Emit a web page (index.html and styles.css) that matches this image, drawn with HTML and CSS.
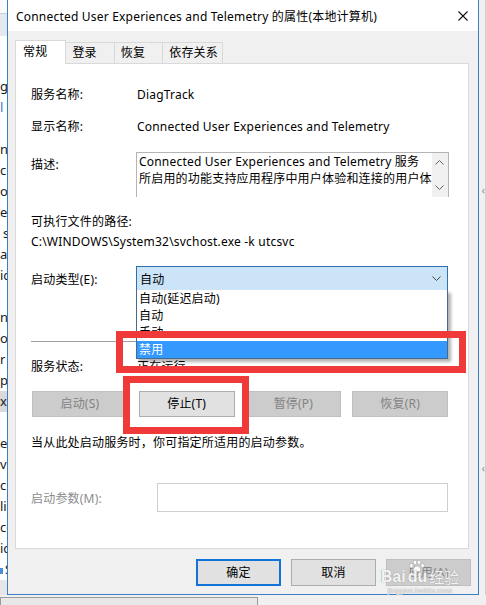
FILE: index.html
```html
<!DOCTYPE html>
<html lang="zh-CN">
<head>
    <meta charset="UTF-8">
    <title>Connected User Experiences and Telemetry 的属性(本地计算机)</title>
    <link rel="stylesheet" href="styles.css">
</head>
<body>
    <div class="desk">
        <!-- services list peeking out behind the dialog -->
        <div class="behind-left">
            <div class="behind-head"></div>
            <div class="bg-row">g</div>
            <div class="bg-row blue">l</div>
            <div class="bg-row"></div>
            <div class="bg-row">n</div>
            <div class="bg-row">c</div>
            <div class="bg-row">o</div>
            <div class="bg-row">e</div>
            <div class="bg-row small">s</div>
            <div class="bg-row">af</div>
            <div class="bg-row">ic</div>
            <div class="bg-row"></div>
            <div class="bg-row">n</div>
            <div class="bg-row">ol</div>
            <div class="bg-row">r</div>
            <div class="bg-row">p</div>
            <div class="bg-row sel">xp</div>
            <div class="bg-row"></div>
            <div class="bg-row">er</div>
            <div class="bg-row">vi</div>
            <div class="bg-row">c</div>
            <div class="bg-row">lis</div>
            <div class="bg-row">ce</div>
            <div class="bg-row">ic</div>
            <div class="bg-row"><span class="bg-icon"></span>S</div>
            <div class="behind-foot"></div>
        </div>

        <div class="window">
            <div class="titlebar">
                <span class="title">Connected User Experiences and Telemetry 的属性(本地计算机)</span>
                <svg class="close" width="10" height="10" viewBox="0 0 10 10">
                    <path d="M0.5 0.5L9.5 9.5M9.5 0.5L0.5 9.5" stroke="#111" stroke-width="1.1" fill="none"/>
                </svg>
            </div>

            <div class="tabs">
                <div class="tab active">常规</div>
                <div class="tab">登录</div>
                <div class="tab">恢复</div>
                <div class="tab">依存关系</div>
            </div>

            <div class="panel">
                <div class="field name-row">
                    <span class="label">服务名称:</span>
                    <span class="value">DiagTrack</span>
                </div>
                <div class="field display-row">
                    <span class="label">显示名称:</span>
                    <span class="value">Connected User Experiences and Telemetry</span>
                </div>
                <div class="field desc-row">
                    <span class="label">描述:</span>
                    <div class="desc-box">
                        <div class="desc-text">Connected User Experiences and Telemetry 服务<br>所启用的功能支持应用程序中用户体验和连接的用户体</div>
                        <div class="scrollbar">
                            <svg width="9" height="5" viewBox="0 0 9 5"><path d="M0.5 4.5L4.5 0.5L8.5 4.5" stroke="#606060" fill="none"/></svg>
                            <svg width="9" height="5" viewBox="0 0 9 5"><path d="M0.5 0.5L4.5 4.5L8.5 0.5" stroke="#606060" fill="none"/></svg>
                        </div>
                    </div>
                </div>
                <div class="path-label">可执行文件的路径:</div>
                <div class="path">C:\WINDOWS\System32\svchost.exe -k utcsvc</div>
                <div class="field startup-row">
                    <span class="label">启动类型(E):</span>
                    <div class="combo">
                        <span class="combo-text">自动</span>
                        <svg width="9" height="5" viewBox="0 0 9 5"><path d="M0.5 0.5L4.5 4.5L8.5 0.5" stroke="#444" fill="none"/></svg>
                        <ul class="dropdown">
                            <li>自动(延迟启动)</li>
                            <li>自动</li>
                            <li>手动</li>
                            <li class="picked">禁用</li>
                        </ul>
                    </div>
                </div>
                <div class="separator"></div>
                <div class="field status-row">
                    <span class="label">服务状态:</span>
                    <span class="value">正在运行</span>
                </div>
                <div class="service-buttons">
                    <div class="btn disabled">启动(S)</div>
                    <div class="btn">停止(T)</div>
                    <div class="btn disabled">暂停(P)</div>
                    <div class="btn disabled">恢复(R)</div>
                </div>
                <div class="hint">当从此处启动服务时，你可指定所适用的启动参数。</div>
                <div class="field params-row">
                    <span class="label wide dim">启动参数(M):</span>
                    <div class="param-input"></div>
                </div>
            </div>

            <div class="footer">
                <div class="btn default">确定</div>
                <div class="btn">取消</div>
                <div class="btn disabled">应用(A)</div>
                <div class="watermark">
                    <div class="wm-logo">Bai<span class="wm-du"><svg width="16" height="12" viewBox="0 0 20 15"><g fill="#fff" stroke="#b0b0b0" stroke-width="0.9"><ellipse cx="3" cy="7" rx="2.2" ry="2.7"/><ellipse cx="7.5" cy="3" rx="2.2" ry="2.7"/><ellipse cx="12.5" cy="3" rx="2.2" ry="2.7"/><ellipse cx="17" cy="7" rx="2.2" ry="2.7"/><path d="M10 7.5C6.8 7.5 4.5 11.5 5.5 13.5C6.5 15 13.5 15 14.5 13.5C15.5 11.5 13.2 7.5 10 7.5Z"/></g></svg>du</span><span class="wm-cn">经验</span></div>
                    <div class="wm-url">jingyan.baidu.com</div>
                </div>
            </div>

            <!-- red annotation frames drawn over the dialog -->
            <div class="mark mark-type"></div>
            <div class="mark mark-stop"></div>
        </div>

        <div class="behind-right">
            <span class="arrow top">‹</span>
            <span class="arrow">‹</span>
        </div>
    </div>
    <div class="behind-bottom">
        <div class="hscroll"></div>
    </div>
</body>
</html>
```

FILE: styles.css
```css
* {
    box-sizing: border-box;
}

body {
    margin: 0;
    width: 486px;
    height: 605px;
    overflow: hidden;
    background: #f0f0f0;
    color: #000;
    font-family: "Noto Sans", "Noto Sans CJK SC", sans-serif;
    font-size: 12px;
    letter-spacing: 0.2px;
}

.desk {
    display: flex;
    height: 595px;
}

/* stuff behind the dialog */
.behind-left {
    width: 7px;
    display: flex;
    flex-direction: column;
    overflow: hidden;
    background: #fff;
    white-space: nowrap;
    letter-spacing: 0;
}

.behind-head {
    height: 76px;
    flex-shrink: 0;
    background: linear-gradient(#fbfbfb 0 13px, #c9d3de 13px 14px, #e4e9ef 14px 36px, #fff 36px);
}

.bg-row {
    height: 21px;
    flex-shrink: 0;
    line-height: 21px;
    font-size: 13px;
    color: #1a1a1a;
}
.bg-row.blue {
    color: #3b78c4;
}
.bg-row.small {
    padding-left: 3px;
}
.bg-row.sel {
    background: #d9d9d9;
}

.bg-icon {
    display: inline-block;
    width: 3px;
    height: 6px;
    margin-right: 2px;
    background: #4a90d9;
}

.behind-foot {
    flex: 1;
    background: #e6e6e6;
}

.behind-right {
    width: 7px;
    display: flex;
    flex-direction: column;
    align-items: flex-end;
    background: #f0f0f0;
    border-right: 1px solid #d0d0d0;
}

.behind-right .arrow {
    margin-top: 268px;
    font-size: 10px;
    line-height: 10px;
    color: #888;
}
.behind-right .arrow.top {
    margin-top: 185px;
}

.behind-bottom {
    height: 10px;
    padding-top: 2px;
    background: #f0f0f0;
}

.hscroll {
    width: 258px;
    height: 8px;
    border: 1px solid #9a9a9a;
    border-bottom: none;
    background: #e8e8e8;
}

/* dialog */
.window {
    position: relative;
    width: 472px;
    height: 595px;
    display: flex;
    flex-direction: column;
    background: #f0f0f0;
    border: 1px solid #3a7fc8;
    border-top: none;
}

.titlebar {
    height: 31px;
    flex-shrink: 0;
    display: flex;
    align-items: center;
    justify-content: space-between;
    padding: 0 10px 0 8px;
    background: #fff;
}

.title {
    font-size: 12px;
}

.close {
    margin-top: 1px;
}

.tabs {
    height: 23px;
    flex-shrink: 0;
    display: flex;
    align-items: flex-end;
    margin: 9px 0 0 7px;
}

.tab {
    height: 21px;
    line-height: 20px;
    padding: 0 17px 0 6px;
    border: 1px solid #d9d9d9;
    border-bottom: none;
    margin-left: -1px;
    background: #f0f0f0;
}
.tab:last-child {
    padding-right: 4px;
}
.tab.active {
    position: relative;
    z-index: 1;
    height: 24px;
    line-height: 22px;
    margin-left: 0;
    margin-bottom: -1px;
    padding: 0 18px 0 7px;
    background: #fff;
}

.panel {
    margin: 0 9px 0 7px;
    padding: 20px 20px 36px 15px;
    border: 1px solid #d9d9d9;
    background: #fff;
}

.field {
    display: flex;
    align-items: center;
}

.label {
    width: 105px;
    flex-shrink: 0;
}
.label.wide {
    width: 126px;
}
.label.dim {
    color: #8c8c8c;
}

.value {
    padding-left: 1px;
}

.name-row {
    height: 20px;
}

.display-row {
    height: 20px;
    margin-top: 12px;
}

.desc-row {
    align-items: flex-start;
    margin-top: 16px;
}
.desc-row .label {
    padding-top: 5px;
    line-height: 16px;
}

.desc-box {
    flex: 1;
    height: 45px;
    display: flex;
    border: 1px solid #b5b5b5;
    border-bottom: none;
}

.desc-text {
    flex: 1;
    padding-left: 2px;
    line-height: 17px;
    white-space: nowrap;
    overflow: hidden;
}

.scrollbar {
    width: 16px;
    display: flex;
    flex-direction: column;
    align-items: center;
    justify-content: space-between;
    padding: 7px 0 7px;
    background: #f0f0f0;
}

.path-label {
    margin-top: 17px;
    line-height: 16px;
}

.path {
    margin-top: 4px;
    line-height: 16px;
}

.startup-row {
    margin-top: 16px;
}

.combo {
    position: relative;
    flex: 1;
    height: 25px;
    display: flex;
    align-items: center;
    justify-content: space-between;
    padding: 0 6px 0 3px;
    border: 1px solid #2e6fb2;
    background: #cce4f7;
}

.dropdown {
    position: absolute;
    z-index: 2;
    top: 100%;
    left: -1px;
    right: -1px;
    margin: 0;
    padding: 0;
    list-style: none;
    background: #fff;
    border: 1px solid #45698f;
    border-top: none;
    box-shadow: 3px 3px 3px rgba(0, 0, 0, 0.3);
}

.dropdown li {
    height: 17px;
    line-height: 17px;
    padding-left: 2px;
}
.dropdown li.picked {
    background: #3399ff;
    color: #fff;
}

.separator {
    height: 1px;
    margin-top: 50px;
    background: #a0a0a0;
}

.status-row {
    height: 16px;
    margin-top: 16px;
}

.service-buttons {
    display: flex;
    gap: 11px;
    margin: 17px 0 0 1px;
}
.service-buttons .btn {
    flex: 1;
}

.btn {
    height: 26px;
    line-height: 24px;
    text-align: center;
    border: 1px solid #adadad;
    background: #e1e1e1;
}
.btn.disabled {
    border-color: #bfbfbf;
    background: #cccccc;
    color: #838383;
}
.btn.default {
    border: 2px solid #0f74d6;
    line-height: 22px;
}

.hint {
    margin-top: 18px;
    line-height: 16px;
}

.params-row {
    margin-top: 32px;
}

.param-input {
    flex: 1;
    height: 29px;
    border: 1px solid #cfcfcf;
}

.footer {
    position: relative;
    display: flex;
    justify-content: flex-end;
    gap: 10px;
    margin-top: 10px;
    padding-right: 7px;
}
.footer .btn {
    width: 85px;
    height: 27px;
    line-height: 25px;
}
.footer .btn.default {
    line-height: 23px;
}

/* baidu watermark over the apply button */
.watermark {
    position: absolute;
    right: 14px;
    top: 1px;
    width: 88px;
    text-align: center;
    letter-spacing: 0;
    color: rgba(255, 255, 255, 0.9);
    text-shadow: 0 0 1px #a0a0a0, 0 0 1px #a0a0a0;
}

.wm-logo {
    display: flex;
    align-items: flex-end;
    justify-content: center;
    font-family: "Liberation Sans", sans-serif;
    font-size: 16px;
    font-weight: bold;
    line-height: 18px;
}

.wm-du {
    display: flex;
    flex-direction: column;
    align-items: center;
    margin-left: 2px;
}
.wm-du svg {
    margin-bottom: -4px;
}

.wm-cn {
    margin-left: 2px;
    font-family: "Noto Sans CJK SC", sans-serif;
    font-size: 15px;
    font-weight: normal;
}

.wm-url {
    font-family: "Liberation Sans", sans-serif;
    font-size: 8px;
    line-height: 9px;
}

.mark {
    position: absolute;
    z-index: 3;
    border: 7px solid #f03a3a;
}
.mark-type {
    left: 108px;
    top: 331px;
    width: 350px;
    height: 42px;
}
.mark-stop {
    left: 115px;
    top: 376px;
    width: 126px;
    height: 58px;
}
```
